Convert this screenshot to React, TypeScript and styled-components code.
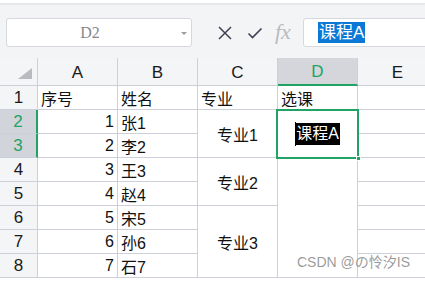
import React from 'react';
import styled, { createGlobalStyle, css } from 'styled-components';

const GlobalStyle = createGlobalStyle`
  html, body {
    margin: 0;
    padding: 0;
    background: #ffffff;
    overflow: hidden;
  }
  * {
    box-sizing: border-box;
  }
`;

const GREEN = '#21a366';
const LINE = '#cdd0d8';

const cellFont = `"Liberation Sans", "Noto Sans CJK SC", sans-serif`;

interface Row {
  no: number;
  seq: string;
  name: string;
}

const rows: Row[] = [
  { no: 1, seq: '序号', name: '姓名' },
  { no: 2, seq: '1', name: '张1' },
  { no: 3, seq: '2', name: '李2' },
  { no: 4, seq: '3', name: '王3' },
  { no: 5, seq: '4', name: '赵4' },
  { no: 6, seq: '5', name: '宋5' },
  { no: 7, seq: '6', name: '孙6' },
  { no: 8, seq: '7', name: '石7' },
];

const majors = [
  { label: '专业1', start: 3, span: 2 },
  { label: '专业2', start: 5, span: 2 },
  { label: '专业3', start: 7, span: 3 },
];

const columns = ['A', 'B', 'C', 'D', 'E'];

const App: React.FC = () => {
  return (
    <Page>
      <GlobalStyle />
      <TopStrip />
      <Toolbar>
        <NameBox>
          <NameText>D2</NameText>
          <DropArrow />
        </NameBox>
        <ToolIcons>
          <svg width='16' height='16' viewBox='0 0 16 16'>
            <path d='M2 2 L14 14 M14 2 L2 14' stroke='#3d4150' strokeWidth='1.5' fill='none' />
          </svg>
          <svg width='16' height='16' viewBox='0 0 16 16'>
            <path d='M1.5 8.5 L5.5 12.5 L14.5 3.5' stroke='#3d4150' strokeWidth='1.6' fill='none' />
          </svg>
          <Fx>fx</Fx>
        </ToolIcons>
        <FormulaBox>
          <Highlight>课程A</Highlight>
        </FormulaBox>
      </Toolbar>

      <Sheet>
        <Corner>
          <svg width='14' height='11' viewBox='0 0 14 11'>
            <polygon points='14,0 14,11 0,11' fill='#b9bbc0' />
          </svg>
        </Corner>
        {columns.map((c) => (
          <ColHead key={c} $active={c === 'D'}>
            {c}
          </ColHead>
        ))}

        {rows.map((r, i) => (
          <React.Fragment key={r.no}>
            <RowHead $active={r.no === 2 || r.no === 3} style={{ gridRow: i + 2 }}>
              {r.no}
            </RowHead>
            <Cell $align={i === 0 ? 'left' : 'right'} style={{ gridRow: i + 2, gridColumn: 2 }}>
              {r.seq}
            </Cell>
            <Cell $align='left' style={{ gridRow: i + 2, gridColumn: 3 }}>
              {r.name}
            </Cell>
            <Cell $align='left' style={{ gridRow: i + 2, gridColumn: 6 }} />
          </React.Fragment>
        ))}

        <Cell $align='left' style={{ gridRow: 2, gridColumn: 4 }}>
          专业
        </Cell>
        <Cell $align='left' style={{ gridRow: 2, gridColumn: 5 }}>
          选课
        </Cell>

        {majors.map((m) => (
          <Cell key={m.label} $align='center' style={{ gridRow: `${m.start} / span ${m.span}`, gridColumn: 4 }}>
            {m.label}
          </Cell>
        ))}

        <Selected style={{ gridRow: '3 / span 2', gridColumn: 5 }}>
          <Editing>
            <Caret />
            课程A
          </Editing>
          <FillHandle />
        </Selected>
        <Cell $align='left' style={{ gridRow: '5 / span 5', gridColumn: 5 }} />

        <Watermark>CSDN @の怜汐IS</Watermark>
      </Sheet>
    </Page>
  );
};

export default App;

const Page = styled.div`
  width: 425px;
  height: 281px;
  position: relative;
  overflow: hidden;
  background: #ffffff;
`;

const TopStrip = styled.div`
  height: 4px;
  background: #ffffff;
  border-bottom: 1px solid #e6e7ea;
  box-shadow: 0 1px 2px rgba(0, 0, 0, 0.06);
  position: relative;
  z-index: 1;
`;

const Toolbar = styled.div`
  height: 54px;
  background: #f3f4f6;
  display: flex;
  align-items: flex-start;
  padding: 14px 0 0 6px;
`;

const NameBox = styled.div`
  width: 186px;
  height: 29px;
  background: #ffffff;
  border: 1px solid #d6d8dd;
  border-radius: 3px;
  display: flex;
  align-items: center;
  position: relative;
`;

const NameText = styled.span`
  flex: 1;
  text-align: center;
  padding-right: 8px;
  font-family: "Liberation Serif", serif;
  font-size: 16px;
  color: #85878e;
`;

const DropArrow = styled.span`
  width: 0;
  height: 0;
  border-left: 3px solid transparent;
  border-right: 3px solid transparent;
  border-top: 3px solid #9a9ca3;
  margin-right: 4px;
  margin-top: 2px;
`;

const ToolIcons = styled.div`
  display: flex;
  align-items: center;
  gap: 14px;
  height: 29px;
  margin-left: 25px;
  width: 86px;
`;

const Fx = styled.span`
  font-family: "Liberation Serif", serif;
  font-style: italic;
  font-size: 22px;
  color: #b8bac0;
  margin-left: -2px;
  margin-top: -2px;
`;

const FormulaBox = styled.div`
  flex: 1;
  height: 29px;
  margin-right: -4px;
  background: #ffffff;
  border: 1px solid #d6d8dd;
  border-radius: 3px;
  display: flex;
  align-items: center;
  padding-left: 14px;
`;

const Highlight = styled.span`
  background: #0a78d4;
  color: #ffffff;
  font-family: ${cellFont};
  font-size: 17px;
  line-height: 21px;
  padding: 0 1px;
`;

const Sheet = styled.div`
  display: grid;
  grid-template-columns: 38px 80px 80px 80px 80px 80px;
  grid-template-rows: 28px repeat(8, 24px) 24px;
  position: relative;
  font-family: ${cellFont};
  font-size: 16px;
  color: #111111;
`;

const headBase = css`
  background: #f4f5f7;
  border-right: 1px solid ${LINE};
  border-bottom: 1px solid ${LINE};
  display: flex;
  align-items: center;
  justify-content: center;
  font-size: 17px;
  color: #1a1a1a;
`;

const Corner = styled.div`
  ${headBase};
  justify-content: flex-end;
  align-items: flex-end;
  padding: 0 5px 6px 0;
`;

const ColHead = styled.div<{ $active?: boolean }>`
  ${headBase};
  padding-top: 2px;
  ${(p) =>
    p.$active &&
    css`
      background: #d4d6db;
      color: ${GREEN};
      border-bottom: 2px solid ${GREEN};
    `}
`;

const RowHead = styled.div<{ $active?: boolean }>`
  ${headBase};
  grid-column: 1;
  ${(p) =>
    p.$active &&
    css`
      background: #d1d4da;
      color: ${GREEN};
      border-right: 2px solid ${GREEN};
    `}
`;

const Cell = styled.div<{ $align: 'left' | 'right' | 'center' }>`
  border-right: 1px solid ${LINE};
  border-bottom: 1px solid ${LINE};
  display: flex;
  align-items: center;
  padding: 0 3px;
  white-space: nowrap;
  justify-content: ${(p) => (p.$align === 'left' ? 'flex-start' : p.$align === 'right' ? 'flex-end' : 'center')};
`;

const Selected = styled.div`
  position: relative;
  border-right: 1px solid ${LINE};
  border-bottom: 1px solid ${LINE};
  display: flex;
  align-items: center;
  justify-content: center;

  &::after {
    content: '';
    position: absolute;
    top: -1px;
    left: -2px;
    right: -2px;
    bottom: -2px;
    border: 2px solid ${GREEN};
    pointer-events: none;
  }
`;

const Editing = styled.span`
  position: relative;
  background: #000000;
  color: #ffffff;
  font-size: 16px;
  line-height: 22px;
  padding: 0 1px;
`;

const Caret = styled.span`
  position: absolute;
  left: 0;
  top: -1px;
  bottom: -1px;
  width: 1px;
  background: #000000;
`;

const FillHandle = styled.span`
  position: absolute;
  right: -4px;
  bottom: -4px;
  width: 5px;
  height: 5px;
  background: ${GREEN};
  border: 1px solid #ffffff;
  z-index: 1;
`;

const Watermark = styled.span`
  position: absolute;
  left: 297px;
  top: 193px;
  font-family: "Liberation Sans", "Noto Sans CJK SC", sans-serif;
  font-size: 14px;
  color: rgba(120, 120, 120, 0.75);
  white-space: nowrap;
`;
